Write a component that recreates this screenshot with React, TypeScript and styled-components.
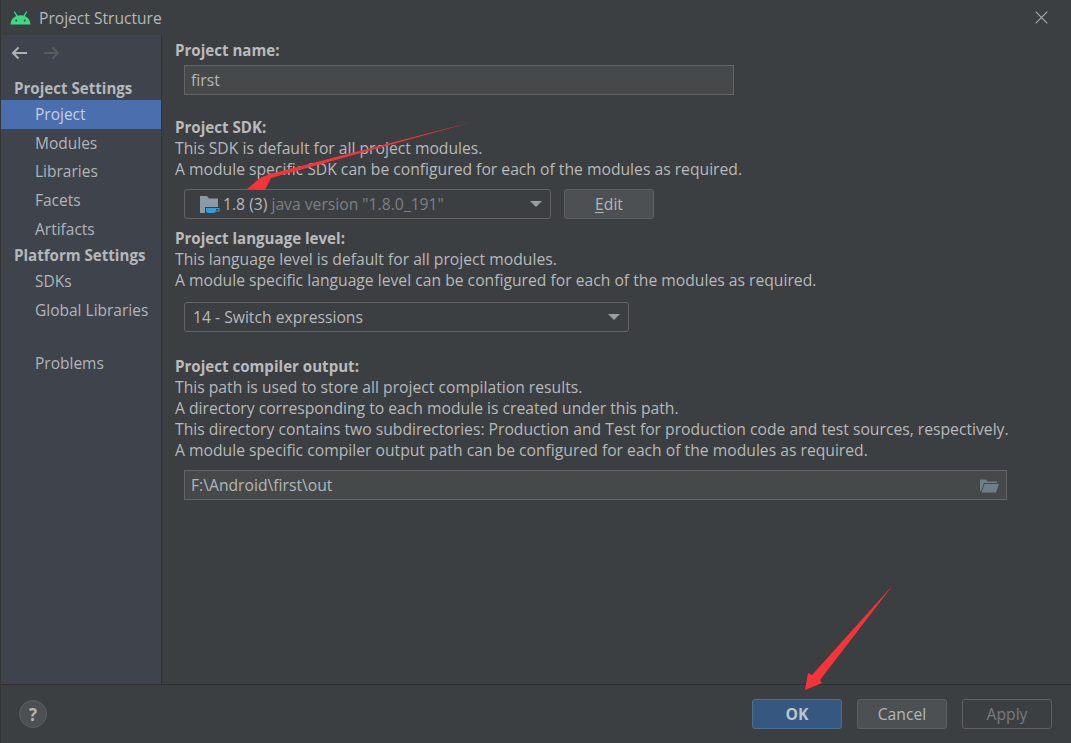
import React from "react";
import styled, { createGlobalStyle } from "styled-components";

const Global = createGlobalStyle`
  html, body { margin: 0; padding: 0; background: #3c3f41; }
  body { font-family: "Open Sans", "Noto Sans", sans-serif; }
`;

const Dialog = styled.div`
  position: relative;
  width: 1071px;
  height: 743px;
  background: #3c3f41;
  color: #bbbbbb;
  font-size: 15.7px;
  display: flex;
  flex-direction: column;
  overflow: hidden;
  box-sizing: border-box;
  border-left: 1px solid #333537;
`;

const TitleBar = styled.div`
  height: 35px;
  flex: none;
  display: flex;
  align-items: center;
  padding: 0 23px 0 9px;
  gap: 8px;
  font-size: 15.6px;
  color: #b4b8bb;
`;

const Title = styled.span`
  flex: 1;
  margin-top: 1px;
`;

const Main = styled.div`
  flex: 1;
  display: flex;
  min-height: 0;
`;

const Sidebar = styled.nav`
  width: 160px;
  flex: none;
  background: #3e434c;
  border-right: 1px solid #323232;
  display: flex;
  flex-direction: column;
`;

const NavButtons = styled.div`
  height: 36px;
  display: flex;
  align-items: center;
  gap: 15px;
  padding: 0 0 0 10px;
`;

const GroupTitle = styled.div`
  height: 25px;
  line-height: 26px;
  padding-left: 13px;
  font-weight: 700;
  font-size: 15.1px;
  color: #b5b8ba;
`;

const NavGroup = styled.div<{ $gap?: number }>`
  margin-top: ${(p) => p.$gap ?? 0}px;
`;

const NavItem = styled.div<{ $active?: boolean }>`
  height: 28.7px;
  line-height: 29px;
  padding-left: 34px;
  font-size: 15.5px;
  background: ${(p) => (p.$active ? "#4b6eaf" : "transparent")};
  color: ${(p) => (p.$active ? "#c6cfdc" : "#b2b5b8")};
`;

const Content = styled.main`
  flex: 1;
  padding: 5px 0 0 13px;
  display: flex;
  flex-direction: column;
`;

const Label = styled.div<{ $top?: number }>`
  font-weight: 700;
  font-size: 15.1px;
  line-height: 21px;
  color: #b9bbbc;
  margin-top: ${(p) => p.$top ?? 0}px;
`;

const Line = styled.div`
  line-height: 21px;
  white-space: nowrap;
  color: #b7b9ba;
`;

const Field = styled.div<{ $w: number; $top: number }>`
  width: ${(p) => p.$w}px;
  height: 30px;
  box-sizing: border-box;
  margin: ${(p) => p.$top}px 0 0 9px;
  background: #45494a;
  border: 1px solid #646464;
  display: flex;
  align-items: center;
  justify-content: space-between;
  padding: 0 7px 0 6px;
  color: #b4b7b8;
  line-height: 26px;
`;

const FieldText = styled.span`
  margin-top: -1px;
`;

const Row = styled.div`
  display: flex;
  align-items: center;
  gap: 13px;
`;

const Combo = styled.div<{ $w: number; $top: number; $pad: number }>`
  width: ${(p) => p.$w}px;
  height: 30px;
  box-sizing: border-box;
  margin: ${(p) => p.$top}px 0 0 9px;
  background: #3c3f41;
  border: 1px solid #646464;
  border-radius: 3px;
  display: flex;
  align-items: center;
  padding: 0 8px 0 ${(p) => p.$pad}px;
  color: #b7b9ba;
`;

const ComboText = styled.span`
  flex: 1;
  display: flex;
  align-items: center;
  gap: 3px;
  white-space: nowrap;
`;

const Muted = styled.span`
  color: #7c7f81;
`;

const Caret = styled.span`
  width: 0;
  height: 0;
  border-left: 6px solid transparent;
  border-right: 6px solid transparent;
  border-top: 6px solid #9a9da0;
`;

const Button = styled.button<{ $kind?: "primary" | "disabled"; $top?: number }>`
  width: 90px;
  height: 30px;
  box-sizing: border-box;
  border-radius: 3px;
  font-family: inherit;
  font-size: 15.7px;
  padding: 0;
  margin-top: ${(p) => p.$top ?? 0}px;
  border: 1px solid ${(p) => (p.$kind === "primary" ? "#4c708c" : "#5e6060")};
  background: ${(p) => (p.$kind === "primary" ? "#365880" : p.$kind === "disabled" ? "#3c3f41" : "#4c5052")};
  color: ${(p) => (p.$kind === "primary" ? "#bbc3cc" : p.$kind === "disabled" ? "#777a7c" : "#b4b7b9")};
  font-weight: ${(p) => (p.$kind === "primary" ? 700 : 400)};
`;

const Mnemonic = styled.span`
  text-decoration: underline;
  text-underline-offset: 2px;
`;

const Footer = styled.footer`
  height: 59px;
  flex: none;
  border-top: 1px solid #2f3032;
  box-sizing: border-box;
  display: flex;
  align-items: center;
  padding: 0 19px 0 18px;
  gap: 15px;
`;

const Help = styled.div`
  width: 28px;
  height: 28px;
  box-sizing: border-box;
  border-radius: 50%;
  background: #4c5052;
  border: 1px solid #5c5f60;
  color: #b4b6b8;
  font-weight: 700;
  font-size: 17px;
  display: flex;
  align-items: center;
  justify-content: center;
  margin-right: auto;
`;

const Annotations = styled.svg`
  position: absolute;
  left: -1px;
  top: 0;
  pointer-events: none;
`;

const Android = () => (
  <svg width="21" height="14" viewBox="0 0 21 14">
    <path d="M0.5 13.5C0.8 8.2 4.6 4.2 10.5 4.2s9.7 4 10 9.3z" fill="#3ddc84" />
    <path d="M4.5 1l2.6 4.2M16.5 1l-2.6 4.2" stroke="#3ddc84" strokeWidth="1.3" strokeLinecap="round" />
    <circle cx="6.3" cy="9.6" r="1" fill="#3c3f41" />
    <circle cx="14.7" cy="9.6" r="1" fill="#3c3f41" />
  </svg>
);

const Close = () => (
  <svg width="13" height="13" viewBox="0 0 13 13">
    <path d="M.7.7l11.6 11.6M12.3.7L.7 12.3" stroke="#a6a9ab" strokeWidth="1.2" />
  </svg>
);

const ArrowIcon = ({ dir, color }: { dir: "l" | "r"; color: string }) => (
  <svg width="17" height="14" viewBox="0 0 17 14">
    <path
      d={dir === "l" ? "M16 7H2M7.5 1.5L2 7l5.5 5.5" : "M1 7h14M9.5 1.5L15 7l-5.5 5.5"}
      fill="none"
      stroke={color}
      strokeWidth="2"
    />
  </svg>
);

const SdkIcon = () => (
  <svg width="20" height="19" viewBox="0 0 20 19" style={{ flex: "none" }}>
    <path d="M0 1h7l2 2.500h9V12H5v6H0z" fill="#8c9aa3" />
    <path d="M5 12h11.500v3.500a3 3 0 0 1-3 3h-5.500a3 3 0 0 1-2.500-3z" fill="#3c3f41" />
    <path d="M6 13h10v2.500a2.500 2.500 0 0 1-2.500 2.500h-5A2.500 2.500 0 0 1 6 15.500z" fill="#3a9bd5" />
    <path d="M16 13.500h3v2.500h-3" fill="none" stroke="#3a9bd5" strokeWidth="1.2" />
  </svg>
);

const FolderIcon = () => (
  <svg width="19" height="15" viewBox="0 0 19 15">
    <path d="M0 1.500h6l1.500 2H17v1.500H4L1 13H0z" fill="#6e7f86" />
    <path d="M4.500 6H19l-3 8.500H1.500z" fill="#6e7f86" />
  </svg>
);

export default function App() {
  return (
    <>
      <Global />
      <Dialog>
        <TitleBar>
          <Android />
          <Title>Project Structure</Title>
          <Close />
        </TitleBar>
        <Main>
          <Sidebar>
            <NavButtons>
              <ArrowIcon dir="l" color="#aeb1b3" />
              <ArrowIcon dir="r" color="#595c5e" />
            </NavButtons>
            <NavGroup $gap={4}>
              <GroupTitle>Project Settings</GroupTitle>
              <NavItem $active>Project</NavItem>
              <NavItem>Modules</NavItem>
              <NavItem>Libraries</NavItem>
              <NavItem>Facets</NavItem>
              <NavItem>Artifacts</NavItem>
            </NavGroup>
            <NavGroup $gap={-1}>
              <GroupTitle>Platform Settings</GroupTitle>
              <NavItem>SDKs</NavItem>
              <NavItem>Global Libraries</NavItem>
            </NavGroup>
            <NavGroup $gap={24}>
              <NavItem>Problems</NavItem>
            </NavGroup>
          </Sidebar>
          <Content>
            <Label>Project name:</Label>
            <Field $w={550} $top={4}><FieldText>first</FieldText></Field>

            <Label $top={22}>Project SDK:</Label>
            <Line>This SDK is default for all project modules.</Line>
            <Line>A module specific SDK can be configured for each of the modules as required.</Line>
            <Row>
              <Combo $w={367} $top={9} $pad={15}>
                <ComboText>
                  <SdkIcon />
                  <span>1.8 (3) <Muted>java version "1.8.0_191"</Muted></span>
                </ComboText>
                <Caret />
              </Combo>
              <Button $top={9}>
                <Mnemonic>E</Mnemonic>dit
              </Button>
            </Row>

            <Label $top={9}>Project language level:</Label>
            <Line>This language level is default for all project modules.</Line>
            <Line>A module specific language level can be configured for each of the modules as required.</Line>
            <Combo $w={445} $top={11} $pad={8}>
              <ComboText>14 - Switch expressions</ComboText>
              <Caret />
            </Combo>

            <Label $top={24}>Project compiler output:</Label>
            <Line>This path is used to store all project compilation results.</Line>
            <Line>A directory corresponding to each module is created under this path.</Line>
            <Line>This directory contains two subdirectories: Production and Test for production code and test sources, respectively.</Line>
            <Line>A module specific compiler output path can be configured for each of the modules as required.</Line>
            <Field $w={823} $top={9}>
              <FieldText>F:\Android\first\out</FieldText>
              <FolderIcon />
            </Field>
          </Content>
        </Main>
        <Footer>
          <Help>?</Help>
          <Button $kind="primary">OK</Button>
          <Button>Cancel</Button>
          <Button $kind="disabled">Apply</Button>
        </Footer>
        <Annotations width="1071" height="743" viewBox="0 0 1071 743">
          <path d="M472 122L271 178L265 190L247 189L260 178L270 174Z" fill="#f5343a" />
          <path d="M893 585L820 680L822 683L805 690L808 673L812 675Z" fill="#f5343a" />
        </Annotations>
      </Dialog>
    </>
  );
}
